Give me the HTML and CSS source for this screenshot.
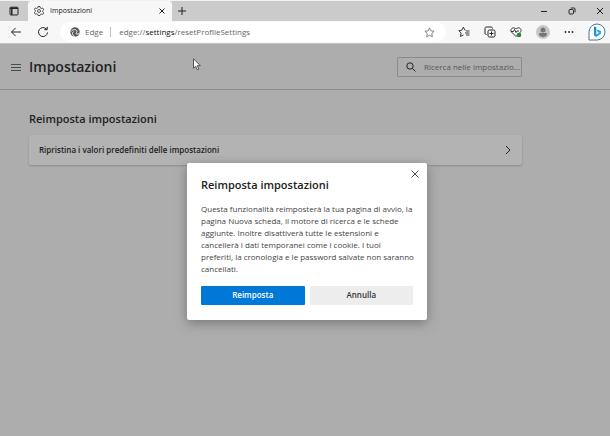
FILE: index.html
```html
<!DOCTYPE html>
<html lang="it">
<head>
<meta charset="utf-8">
<title>Impostazioni</title>
<link rel="stylesheet" href="styles.css">
</head>
<body>
<header class="tabstrip">
  <button class="tab-actions" aria-label="Menu schede"><svg width="10" height="10" viewBox="0 0 10 10"><rect x="1" y="1.200" width="8" height="7.800" rx="1"/><path d="M1 2.200h8M2.800 3v6" stroke-width="1.400"/></svg></button>
  <div class="tab">
    <svg width="10" height="10" viewBox="0 0 20 20"><path d="M8 1h4l.7 3 1.800 1 3-1 2 3.500-2.300 2v2l2.300 2-2 3.500-3-1-1.800 1L12 19H8l-.7-2.500-1.800-1-3 1-2-3.500 2.300-2v-2l-2.300-2L2.500 4l3 1 1.800-1z" stroke-width="1.500"/><circle cx="10" cy="10" r="3" stroke-width="1.500"/></svg>
    <span class="tab-title">Impostazioni</span>
    <button aria-label="Chiudi scheda"><svg width="6" height="6" viewBox="0 0 6 6"><path d="M.5.5l5 5M5.500.5l-5 5"/></svg></button>
  </div>
  <button class="new-tab" aria-label="Nuova scheda"><svg width="10" height="10" viewBox="0 0 10 10"><path d="M5 1v8M1 5h8"/></svg></button>
  <div class="window-controls">
    <button aria-label="Riduci a icona"><svg width="8" height="8" viewBox="0 0 8 8"><path d="M1 4.500h6"/></svg></button>
    <button aria-label="Ripristina"><svg width="8" height="8" viewBox="0 0 8 8"><rect x="1" y="2.500" width="4.500" height="4.500" rx="1"/><path d="M2.700 1h3.300a1 1 0 0 1 1 1v3.300"/></svg></button>
    <button aria-label="Chiudi"><svg width="8" height="8" viewBox="0 0 8 8"><path d="M1 1l6 6M7 1l-6 6"/></svg></button>
  </div>
</header>
<nav class="toolbar">
  <button aria-label="Indietro"><svg width="12" height="12" viewBox="0 0 12 12"><path d="M11 6H1.500M5.500 2l-4 4 4 4"/></svg></button>
  <button aria-label="Aggiorna"><svg width="12" height="12" viewBox="0 0 12 12"><path d="M10.500 6.500A4.500 4.500 0 1 1 9 2.700l1 .8M10.200.8v2.900H7.300"/></svg></button>
  <div class="address">
    <svg width="10" height="10" viewBox="0 0 20 20"><circle cx="10" cy="10" r="9.500" fill="#555" stroke="none"/><path d="M2 9c3-5 12-5 12 0 0 2-2 2-2 4 1 2 5 1 7-1M7 9c-4 4-1 9 3 10" stroke="#fff" stroke-width="2"/></svg>
    <span class="brand">Edge</span>
    <span class="url">edge://<b>settings</b>/resetProfileSettings</span>
    <button aria-label="Aggiungi ai preferiti"><svg class="muted" width="11" height="11" viewBox="0 0 12 12"><path d="M6 1l1.500 3.200 3.500.5-2.500 2.400.6 3.500L6 9l-3.100 1.600.6-3.500L1 4.700l3.500-.5z"/></svg></button>
  </div>
  <div class="actions">
    <button aria-label="Preferiti"><svg width="12" height="12" viewBox="0 0 12 12"><path d="M7.500 4.200H7L5.300 1.200 3.900 4.200.8 4.700l2.300 2.300-.6 3.500 3-1.600M8 5h3.500M7 7h4.500M8 9h3.500" stroke-width=".9"/></svg></button>
    <button aria-label="Raccolte"><svg width="12" height="12" viewBox="0 0 12 12"><rect x="4" y="4" width="7" height="7" rx="1.500"/><path d="M2.500 8.500C1.500 8.500 1 8 1 7V2.500C1 1.500 1.500 1 2.500 1H7c1 0 1.500.5 1.500 1.500M7.500 5.500v4M5.500 7.500h4"/></svg></button>
    <button aria-label="Prestazioni"><svg width="12" height="12" viewBox="0 0 12 12"><path d="M6 10.500L1.500 6C-.5 3.500 3 0 6 3c3-3 6.500.5 4.500 3L6 10.500M1 5.500h2.500l1-2 1.500 3 1-1.500h2" stroke-width=".9"/><circle cx="9" cy="9" r="2.300" fill="#24894b" stroke="none"/></svg></button>
    <button aria-label="Profilo"><svg width="14" height="14" viewBox="0 0 14 14"><g stroke="none"><circle cx="7" cy="7" r="7" fill="#c9c7c5"/><circle cx="7" cy="5" r="2.500" fill="#777"/><path d="M3 9q0-1 1-1h6q1 0 1 1c0 4-8 4-8 0" fill="#777"/></g></svg></button>
    <button aria-label="Impostazioni e altro"><svg width="10" height="10" viewBox="0 0 10 10"><g fill="#222" stroke="none"><circle cx="1.500" cy="5" r=".9"/><circle cx="5" cy="5" r=".9"/><circle cx="8.500" cy="5" r=".9"/></g></svg></button>
    <button aria-label="Bing"><svg width="18" height="18" viewBox="0 0 18 18"><defs><linearGradient id="bing" x2="1" y2="1"><stop stop-color="#1679d2"/><stop offset="1" stop-color="#35bce5"/></linearGradient></defs><path d="M1 17V9a8 8 0 1 1 8 8z" fill="#fff" stroke="#3d769f"/><path d="M6 3.500l2.300.8v7.200l3-1.800-1.700-.8-1-2.500 4.400 1.600v2.700L8.300 14 6 12.500z" fill="url(#bing)" stroke="none"/></svg></button>
  </div>
</nav>
<main class="page">
  <header class="page-header">
    <button aria-label="Menu"><svg width="10" height="8" viewBox="0 0 10 8"><path d="M0 1.500h10M0 4.500h10M0 7.500h10" stroke-width=".7"/></svg></button>
    <h1>Impostazioni</h1>
    <label class="search">
      <svg width="10" height="10" viewBox="0 0 10 10"><circle cx="4" cy="4" r="3.200"/><path d="M6.400 6.400L9.500 9.500"/></svg>
      <input type="text" placeholder="Ricerca nelle impostazio..." aria-label="Ricerca nelle impostazioni">
    </label>
  </header>
  <section class="reset">
    <h2>Reimposta impostazioni</h2>
    <button class="card"><span>Ripristina i valori predefiniti delle impostazioni</span><svg width="6" height="10" viewBox="0 0 6 10"><path d="M1 1l4 4-4 4"/></svg></button>
  </section>
  <svg class="cursor" width="8" height="13" viewBox="0 0 8 13"><path d="M.5.8v9.400l2.200-2 1.500 3.600 1.600-.7-1.500-3.400h3z" fill="#fff" stroke="#333" stroke-width=".8"/></svg>
  <div class="overlay">
    <div class="dialog" role="dialog" aria-modal="true" aria-labelledby="dialog-title">
      <button class="close" aria-label="Chiudi"><svg width="8" height="8" viewBox="0 0 8 8"><path d="M.5.5l7 7M7.500.5l-7 7" stroke-width=".8"/></svg></button>
      <h2 id="dialog-title">Reimposta impostazioni</h2>
      <p>Questa funzionalità reimposterà la tua pagina di avvio, la pagina Nuova scheda, il motore di ricerca e le schede aggiunte. Inoltre disattiverà tutte le estensioni e cancellerà i dati temporanei come i cookie. I tuoi<br>preferiti, la cronologia e le password salvate non saranno cancellati.</p>
      <div class="buttons"><button class="primary">Reimposta</button><button class="secondary">Annulla</button></div>
    </div>
  </div>
</main>
</body>
</html>
```
FILE: styles.css
```css
* { box-sizing: border-box; }
body {
  margin: 0;
  min-height: 100vh;
  display: flex;
  flex-direction: column;
  font: 8px/12px "Open Sans", "Noto Sans", sans-serif;
  color: #222;
  background: #adadad;
}
button {
  padding: 0;
  border: 0;
  background: none;
  font: inherit;
  color: inherit;
  display: flex;
  align-items: center;
  justify-content: center;
}
svg { flex: none; fill: none; stroke: #222; }
h1, h2, p { margin: 0; }
h1, h2 { font-weight: 600; }

.tabstrip {
  display: flex;
  height: 21px;
  border-top: 1px solid #f2f2f2;
  background: #cbcbcb;
}
.tab-actions { width: 28px; }
.tab {
  display: flex;
  align-items: center;
  gap: 6px;
  width: 144px;
  padding: 0 7px 0 6px;
  border-radius: 3px 3px 0 0;
  background: #f7f7f7;
}
.tab-title { flex: 1; font-size: 7px; }
.new-tab { width: 20px; }
.window-controls { display: flex; gap: 20px; margin-left: auto; padding-right: 6px; }

.toolbar {
  display: flex;
  align-items: center;
  gap: 15px;
  height: 23px;
  padding: 0 4px 0 10px;
  border-bottom: 1px solid #c4c4c4;
  background: #f7f7f7;
}
.address {
  flex: 1;
  display: flex;
  align-items: center;
  height: 20px;
  margin-left: -4px;
  margin-right: -3px;
  padding: 0 11px 0 10px;
  border-radius: 10px;
  background: #fff;
  color: #666;
}
.brand { margin-left: 5px; padding-right: 7px; border-right: 1px solid #bbb; line-height: 10px; }
.url { flex: 1; margin-left: 8px; }
.url b { font-weight: 400; color: #111; }
.muted { stroke: #777; }
.actions { display: flex; gap: 14px; }

.page { position: relative; flex: 1; }
.page-header {
  display: flex;
  align-items: center;
  height: 46px;
  padding: 0 88px 0 11px;
  border-bottom: 1px solid #8e8e8e;
}
h1 { flex: 1; margin-left: 8px; font-size: 14px; line-height: 20px; }
.search {
  display: flex;
  align-items: center;
  gap: 8px;
  width: 125px;
  height: 20px;
  padding-left: 8px;
  border: 1px solid #8b8b8b;
  border-radius: 1px;
}
.search input {
  flex: 1;
  min-width: 0;
  padding: 0;
  border: 0;
  background: none;
  font: inherit;
}
.search input::placeholder { color: #555; opacity: 1; }
.reset { padding: 20px 88px 0 29px; }
.reset h2, .dialog h2 { font-size: 11px; line-height: 18px; }
.card {
  width: 100%;
  height: 30px;
  margin-top: 7px;
  padding: 0 11px 0 10px;
  justify-content: space-between;
  border-radius: 2px;
  background: #b3b3b3;
  box-shadow: 0 1px 2px #8a8a8a;
  font-weight: 600;
}
.cursor { position: absolute; left: 193px; top: 14px; }

.overlay {
  position: absolute;
  inset: 0;
  display: flex;
  align-items: center;
  justify-content: center;
  padding: 2px 0 0 4px;
}
.dialog {
  position: relative;
  width: 240px;
  padding: 13px 14px 15px;
  border-radius: 2px;
  background: #fff;
  box-shadow: 0 3px 12px #777;
}
.dialog p { margin: 9px -4px 11px 0; color: #444; }
.close { position: absolute; top: 7px; right: 8px; }
.buttons { display: grid; grid-template-columns: 1fr 1fr; gap: 5px; }
.buttons button { height: 19px; border-radius: 1px; font-weight: 600; }
.primary { background: #0078d7; color: #fff; }
.buttons .secondary { background: #ededed; color: #333; }
```
